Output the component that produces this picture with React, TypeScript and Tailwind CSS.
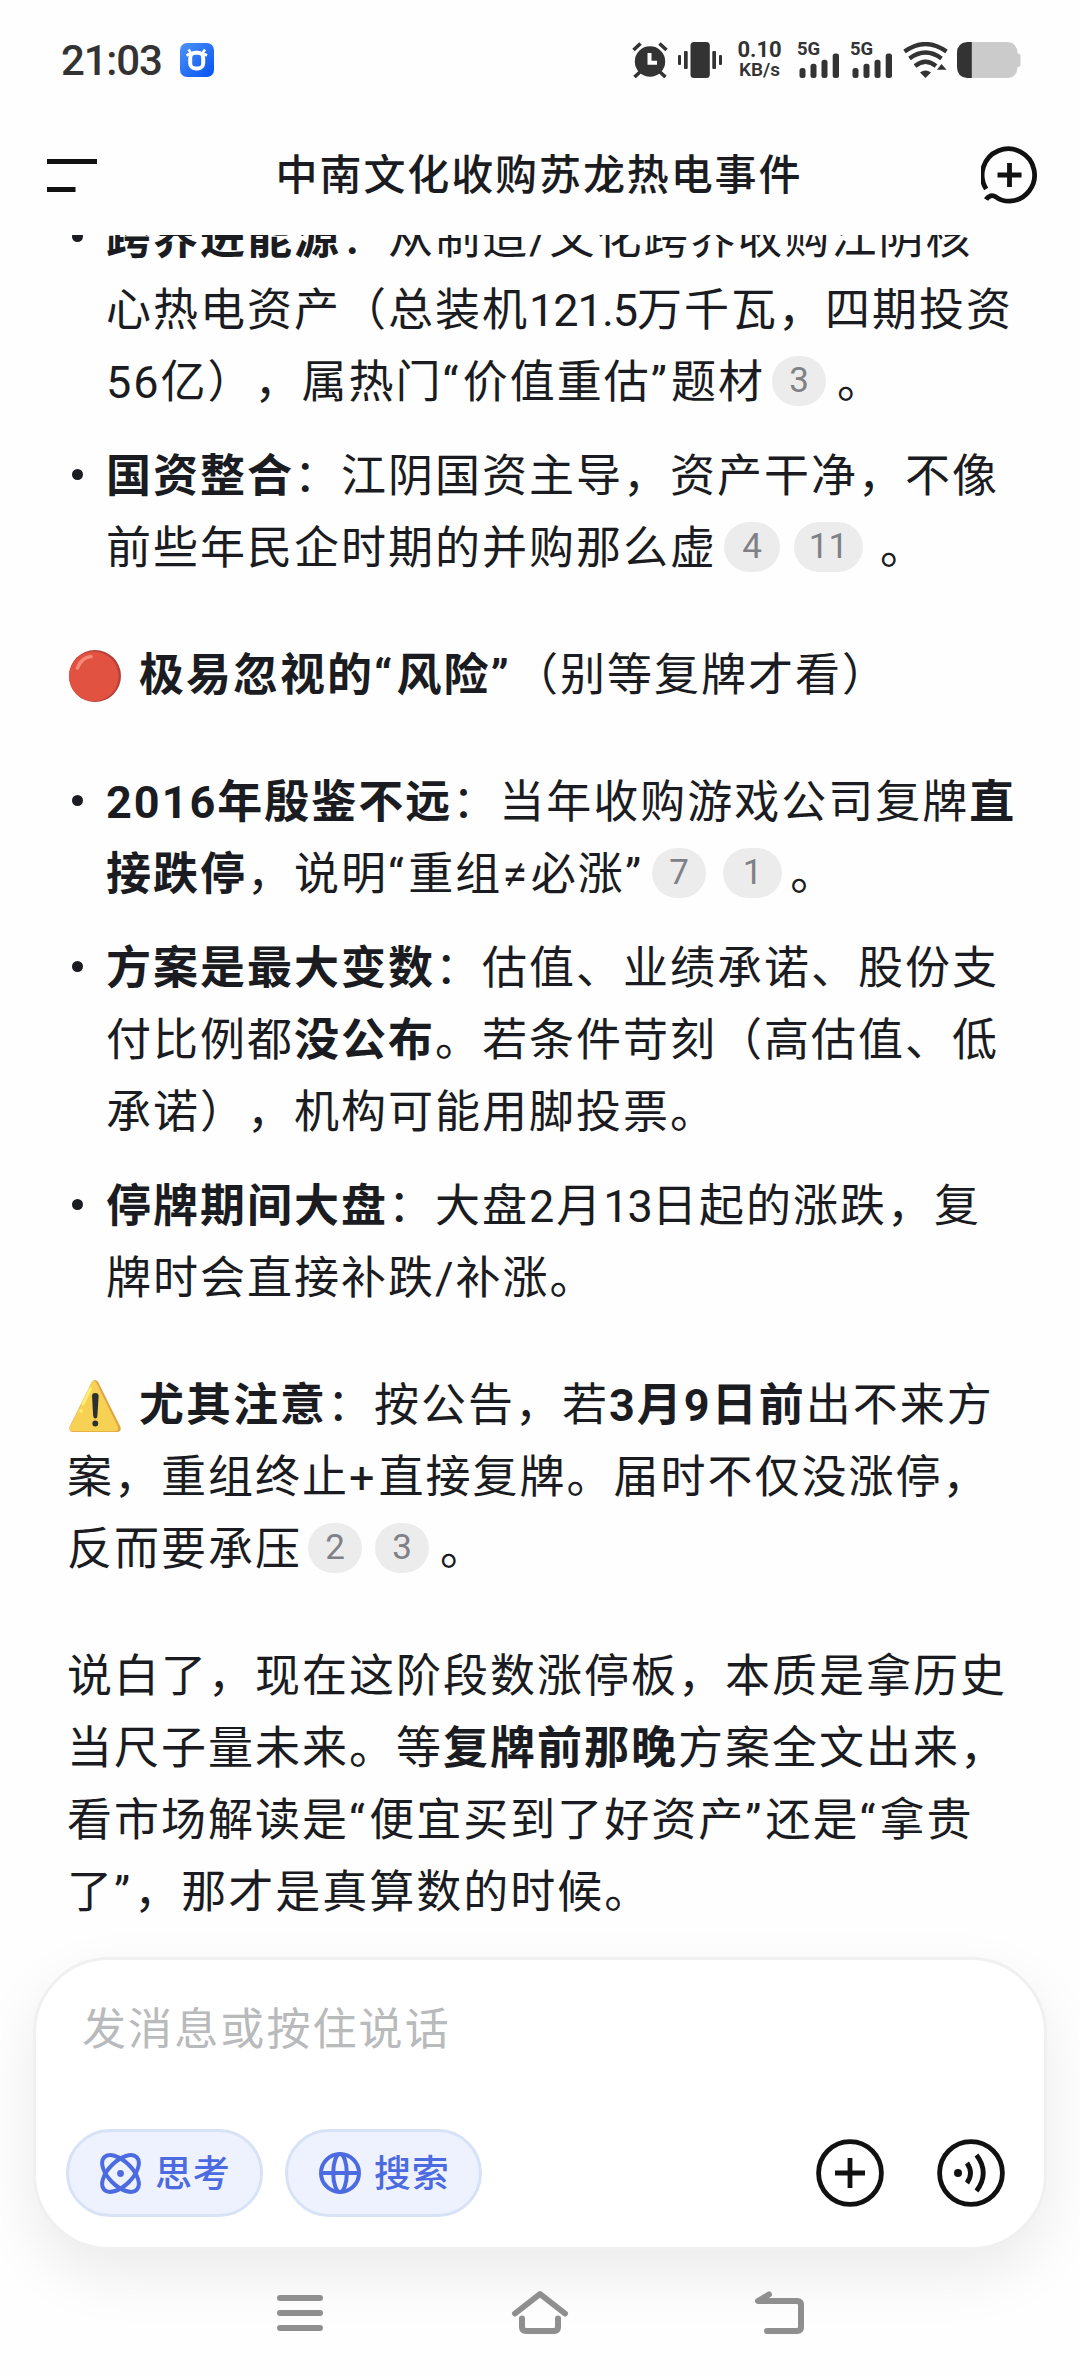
import type { ReactNode } from 'react';

const Line = ({ children }: { children: ReactNode }) => (
  <div className="flex h-[72px] items-center whitespace-pre leading-[72px]">{children}</div>
);

const Item = ({ children }: { children: ReactNode }) => (
  <li className="flex">
    <span className="mt-[28px] mr-[23px] ml-[5px] size-[11px] shrink-0 rounded-full bg-[#1a1c22]" />
    <div>{children}</div>
  </li>
);

// curly quotes need a bit more room than the other glyphs
const Quote = ({ children, open = true, close = true }: { children?: ReactNode; open?: boolean; close?: boolean }) => (
  <>
    {open && <span className="tracking-[4.2px]">“</span>}
    {children}
    {close && <span className="tracking-[4.2px]">”</span>}
  </>
);

const Cite = ({ n, className = 'w-[54px]' }: { n: number; className?: string }) => (
  <span
    className={`-mt-[5px] flex h-[50px] shrink-0 items-center justify-center rounded-full bg-[#ececec] text-[35px] tracking-normal text-[#808186] ${className}`}
  >
    {n}
  </span>
);

const RedCircle = () => (
  <svg className="-mt-[1px] mr-[18px] ml-[2px] size-[52px]" viewBox="0 0 52 52">
    <circle cx="26" cy="26" r="26" fill="#b6413a" />
    <circle cx="24.8" cy="26.4" r="24.8" fill="#e15241" />
    <path d="M8.5 18C11 11 16 7 22 6.500" fill="none" stroke="#f58a77" strokeWidth="3.600" strokeLinecap="round" />
  </svg>
);

const Warning = () => (
  <svg className="-mt-[1px] mr-[18px] ml-[2px] size-[52px]" viewBox="0 0 52 52">
    <path d="M23 1.800Q26-1.600 29 1.800L51.300 46.500Q53 51.800 48 52H4Q-1 51.800.7 46.500Z" fill="#e0a543" />
    <path d="M22.500 2.500Q25.500-1 27.500 3L48.600 46Q50.500 51 46 51.300H4.500Q-.5 51.300 1.200 46.500Z" fill="#f7d154" />
    <path d="M21.500 9 14 24" stroke="#fdee74" strokeWidth="3" strokeLinecap="round" />
    <circle cx="12" cy="31" r="1.800" fill="#fdee74" />
    <path d="M23 16Q23 13 26.300 13T29.600 16L28.400 36Q28 38.500 26.300 38.500T24.200 36Z" fill="#2e2f31" />
    <circle cx="26.300" cy="43.500" r="2.900" fill="#2e2f31" />
  </svg>
);

const Signal = () => (
  <div className="flex h-9 w-[43px] flex-col">
    <span className="-mt-[3px] h-[18px] text-[18.5px] leading-5 font-bold">5G</span>
    <svg className="-mt-[4px] h-[25px] w-[43px] shrink-0" viewBox="0 0 43 25" fill="#333">
      <rect x="2.500" y="15" width="6" height="10" rx="2.500" />
      <rect x="13.500" y="10.800" width="6" height="14.200" rx="2.500" />
      <rect x="24.500" y="6.800" width="6" height="18.200" rx="2.500" />
      <rect x="35.700" y=".5" width="6.300" height="24.500" rx="2.500" />
    </svg>
  </div>
);

const StatusBar = () => (
  <div className="flex h-[120px] items-center pl-[61px] text-[#333]">
    <span className="w-[119px] text-[42px] font-medium tracking-[-1.2px]">21:03</span>
    <svg className="size-[34px]" viewBox="0 0 34 34">
      <defs>
        <linearGradient id="app" x1="0" y1="0" x2="1" y2="1">
          <stop offset="0" stopColor="#4e93f8" />
          <stop offset="1" stopColor="#0552f0" />
        </linearGradient>
      </defs>
      <rect width="34" height="34" rx="7" fill="url(#app)" />
      <rect x="10.200" y="9.800" width="13" height="15.600" rx="5.200" fill="none" stroke="#fff" strokeWidth="4" />
      <path d="M6.500 12.500 12 9.500M27 12.500 21.500 9.500M8.500 6.500 11.500 11M25 6.500 22 11" stroke="#fff" strokeWidth="2.600" />
    </svg>
    <div className="ml-[418px] flex items-center">
      <svg className="h-9 w-9" viewBox="0 0 36 36">
        <circle cx="18" cy="19.500" r="15.200" fill="#333" />
        <path d="M1.500 8 8.500 1.500M34.500 8 27.500 1.500M8 30 2.500 35M28 30 33.500 35" stroke="#333" strokeWidth="3.600" />
        <path d="M17.500 11V20.800H25" fill="none" stroke="#fff" strokeWidth="4" />
      </svg>
      <svg className="ml-[10px] h-9 w-[44px]" viewBox="0 0 44 36" fill="#333">
        <rect x="12.500" width="19.300" height="36" rx="3.500" />
        <rect x="6" y="9" width="3.700" height="18" rx="1" />
        <rect x="0" y="13" width="3" height="10" rx="1" />
        <rect x="34.300" y="9" width="3.700" height="18" rx="1" />
        <rect x="41" y="13" width="3" height="10" rx="1" />
      </svg>
      <div className="ml-[15px] flex w-[45px] flex-col items-center font-bold">
        <span className="text-[22px] leading-5">0.10</span>
        <span className="text-[19px] leading-5 font-semibold">KB/s</span>
      </div>
      <div className="ml-[15px] flex gap-[10px]">
        <Signal />
        <Signal />
      </div>
      <svg className="ml-[10px] h-9 w-[45px]" viewBox="0 0 45 36" fill="none" stroke="#333" strokeWidth="4.200">
        <path d="M1.500 9.500Q22.500-5.500 43.500 9.500" />
        <path d="M6.500 16.500Q22.500 4.500 38.500 16.500" />
        <path d="M12 24Q22.500 15.500 33 24" />
        <path d="M17 30.500Q22.500 26.500 28 30.500L22.500 36Z" fill="#333" stroke="none" />
        <path d="M34 27.800 38.500 22 43.500 27.800Z" fill="#333" stroke="none" />
      </svg>
      <svg className="ml-[9px] h-9 w-[64px]" viewBox="0 0 64 36">
        <path d="M14 0H51Q60.500 1 60.500 11.500Q63.500 11.500 63.500 14V22.500Q63.500 25 60.500 25Q60 35.500 51 36H14Z" fill="#cbcbcb" />
        <path d="M14.800 0H10Q0 1 0 11V25Q0 35 10 36H14.800Z" fill="#333" />
      </svg>
    </div>
  </div>
);

const Header = () => (
  <header className="flex h-[115px] items-center justify-between pr-[42px] pb-[5px] pl-[47px]">
    <svg className="h-[33px] w-[50px]" viewBox="0 0 50 33" fill="#111">
      <rect width="50" height="5" />
      <rect y="28" width="28.500" height="5" />
    </svg>
    <h1 className="text-[42px] font-medium tracking-[1.9px] text-[#1a1c22]">中南文化收购苏龙热电事件</h1>
    <svg className="h-[58px] w-[57px]" viewBox="0 0 57 58" fill="none" stroke="#111" strokeWidth="4.800">
      <path d="M5.200 43A26.200 26.200 0 1 1 28.500 55.200C22.500 55.200 18 53.500 15 51C11.500 48.500 7.500 49.500 5 53.500" />
      <path d="M28.500 17V41M16.500 29H40.500" />
    </svg>
  </header>
);

const Composer = () => (
  <div className="relative mx-[33px] flex h-[293px] flex-col rounded-[76px] border-[3px] border-[#f0f0f0] bg-white px-[30px] shadow-[0_24px_60px_rgba(0,0,0,0.08)]">
    <p className="mt-[34px] pl-[16px] text-[44px] leading-[72px] tracking-[2.1px] text-[#b8babb]">发消息或按住说话</p>
    <div className="mt-[63px] flex h-[88px] items-center">
      <button className="flex h-[88px] w-[197px] items-center rounded-full border-[3px] border-[#d8e2f6] bg-[#edf2fe] pl-[31px] text-[37px] tracking-[0.8px] text-[#4d6be0]">
        <svg className="mr-[14px] size-[41px]" viewBox="0 0 41 41" fill="none" stroke="#4d6be0" strokeWidth="4">
          <ellipse cx="20.500" cy="20.500" rx="12" ry="23" transform="rotate(45 20.500 20.500)" />
          <ellipse cx="20.500" cy="20.500" rx="12" ry="23" transform="rotate(-45 20.500 20.500)" />
          <circle cx="20.500" cy="20.500" r="3.400" fill="#4d6be0" stroke="none" />
        </svg>
        <span className="mt-[3px] font-medium">思考</span>
      </button>
      <button className="ml-[22px] flex h-[88px] w-[197px] items-center rounded-full border-[3px] border-[#d8e2f6] bg-[#edf2fe] pl-[31px] text-[37px] tracking-[0.8px] text-[#4d6be0]">
        <svg className="mr-[13px] size-[42px]" viewBox="0 0 42 42" fill="none" stroke="#4d6be0" strokeWidth="4">
          <circle cx="21" cy="21" r="19" />
          <ellipse cx="21" cy="21" rx="6.800" ry="19" />
          <path d="M2 21H40" />
        </svg>
        <span className="mt-[3px] font-medium">搜索</span>
      </button>
      <svg className="ml-auto size-[68px]" viewBox="0 0 68 68" fill="none" stroke="#111" strokeWidth="4.800">
        <circle cx="34" cy="34" r="31.400" />
        <path d="M34 19V49M19 34H49" />
      </svg>
      <svg className="mr-[9px] ml-[53px] size-[68px]" viewBox="0 0 68 68" fill="none" stroke="#111" strokeWidth="4.800">
        <circle cx="34" cy="34" r="31.400" />
        <circle cx="21" cy="34" r="4" fill="#111" stroke="none" />
        <path d="M30 24Q37 34 30 44M39.500 16Q53 34 39.500 52" />
      </svg>
    </div>
  </div>
);

const NavBar = () => (
  <nav className="relative mt-[36px] flex items-center justify-center gap-[184px]">
    <svg className="h-[52px] w-[52px]" viewBox="0 0 52 52" stroke="#8f8f8f" strokeWidth="6" strokeLinecap="round">
      <path d="M6 12H46M6 27H46M6 42H46" />
    </svg>
    <svg className="h-[52px] w-[60px]" viewBox="0 0 60 52" fill="none" stroke="#8f8f8f" strokeWidth="6" strokeLinecap="round" strokeLinejoin="round">
      <path d="M5 27.500 30 8 55 27.500" />
      <path d="M12 32.500V41Q12 45 16 45H44Q48 45 48 41V32.500" />
    </svg>
    <svg className="h-[52px] w-[52px]" viewBox="0 0 52 52" fill="none" stroke="#8f8f8f" strokeWidth="6" strokeLinecap="round" strokeLinejoin="round">
      <path d="M15 8.500 4 15H43Q47 15 47 19V41Q47 45 43 45H13" />
    </svg>
  </nav>
);

export default function App() {
  return (
    <div className="flex h-[2376px] w-[1080px] flex-col overflow-hidden bg-[#fefefe] font-[Roboto,'Noto_Sans_CJK_SC',sans-serif] [text-spacing-trim:space-all]">
      <StatusBar />
      <Header />
      <main className="h-[1722px] overflow-hidden pl-[67px] text-[45px] tracking-[2px] text-[#1a1c22]">
        <ul className="-mt-[32px] flex flex-col gap-[22px]">
          <Item>
            <Line>
              <b>跨界进能源</b>：从制造/文化跨界收购江阴核
            </Line>
            <Line>
              心热电资产（总装机<span className="tracking-[-1px]">121.5</span>万千瓦，四期投资
            </Line>
            <Line>
              56亿），属热门<Quote>价值重估</Quote>题材
              <Cite n={3} className="mr-[11px] ml-[7px] w-[54px]" />。
            </Line>
          </Item>
          <Item>
            <Line>
              <b>国资整合</b>：江阴国资主导，资产干净，不像
            </Line>
            <Line>
              前些年民企时期的并购那么虚
              <Cite n={4} className="ml-[7px] w-[56px]" />
              <Cite n={11} className="mr-[17px] ml-[14px] w-[69px]" />。
            </Line>
          </Item>
        </ul>
        <div className="mt-[55px]">
          <Line>
            <RedCircle />
            <b>
              极易忽视的<Quote>风险</Quote>
            </b>
            （别等复牌才看）
          </Line>
        </div>
        <ul className="mt-[55px] flex flex-col gap-[22px]">
          <Item>
            <Line>
              <b>2016年殷鉴不远</b>：当年收购游戏公司复牌<b>直</b>
            </Line>
            <Line>
              <b>接跌停</b>，说明
              <Quote>
                重组<span className="tracking-[4px]">≠</span>必涨
              </Quote>
              <Cite n={7} className="ml-[7px] w-[54px]" />
              <Cite n={1} className="mr-[8px] ml-[17px] w-[59px]" />。
            </Line>
          </Item>
          <Item>
            <Line>
              <b>方案是最大变数</b>：估值、业绩承诺、股份支
            </Line>
            <Line>
              付比例都<b>没公布</b>。若条件苛刻（高估值、低
            </Line>
            <Line>承诺），机构可能用脚投票。</Line>
          </Item>
          <Item>
            <Line>
              <b>停牌期间大盘</b>：大盘2月<span className="tracking-[-1px]">13</span>日起的涨跌，复
            </Line>
            <Line>牌时会直接补跌/补涨。</Line>
          </Item>
        </ul>
        <div className="mt-[55px]">
          <Line>
            <Warning />
            <b>尤其注意</b>：按公告，若<b>3月9日前</b>出不来方
          </Line>
          <Line>
            案，重组终止<span className="tracking-[4px]">+</span>直接复牌。届时不仅没涨停，
          </Line>
          <Line>
            反而要承压
            <Cite n={2} className="ml-[6px] w-[54px]" />
            <Cite n={3} className="mr-[11px] ml-[13px] w-[54px]" />。
          </Line>
        </div>
        <div className="mt-[55px]">
          <Line>说白了，现在这阶段数涨停板，本质是拿历史</Line>
          <Line>
            当尺子量未来。等<b>复牌前那晚</b>方案全文出来，
          </Line>
          <Line>
            看市场解读是<Quote>便宜买到了好资产</Quote>还是<Quote close={false} />拿贵
          </Line>
          <Line>
            了<Quote open={false} />，那才是真算数的时候。
          </Line>
        </div>
      </main>
      <Composer />
      <NavBar />
    </div>
  );
}
